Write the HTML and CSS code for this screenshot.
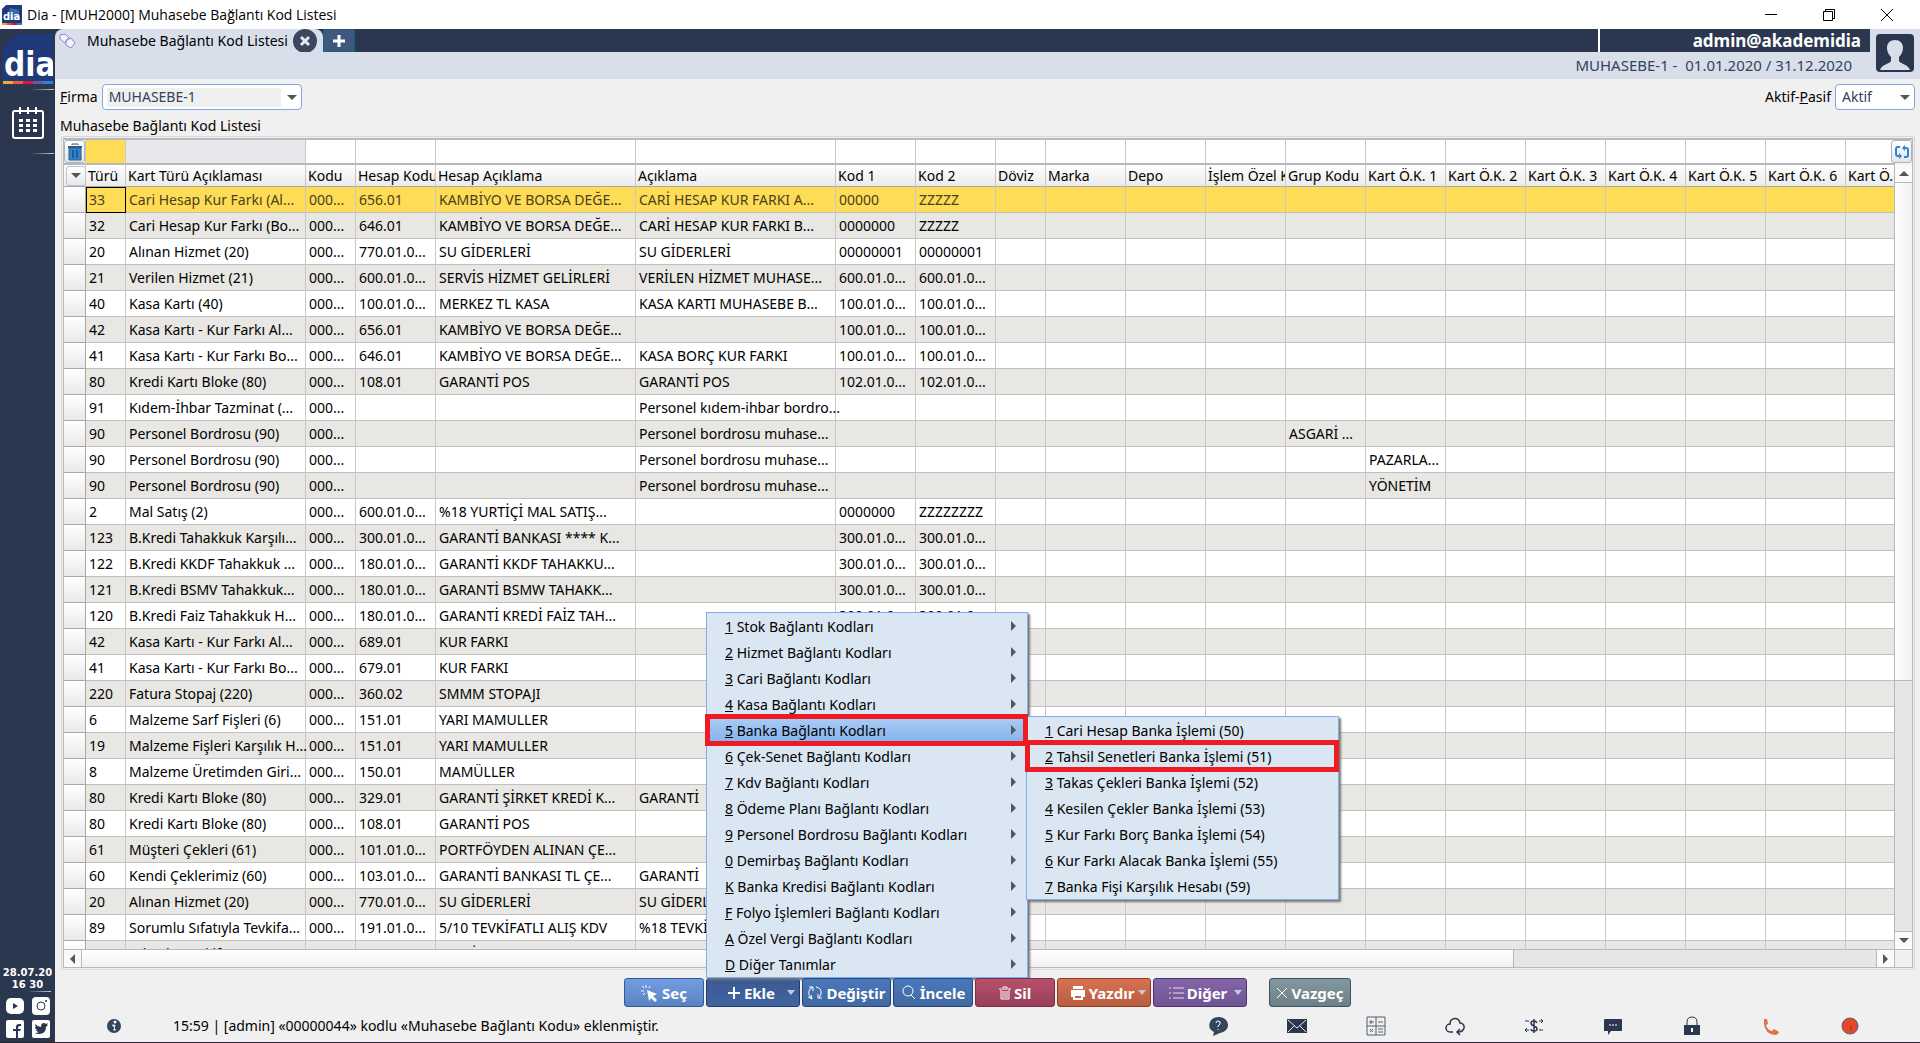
FILE: index.html
```html
<!DOCTYPE html>
<html lang="tr">
<head>
    <meta charset="UTF-8">
    <meta name="viewport" content="width=device-width, initial-scale=1.0">
    <title>Dia - [MUH2000] Muhasebe Bağlantı Kod Listesi</title>
    <link rel="stylesheet" href="styles.css">
</head>
<body>
    <header class="titlebar">
        <svg class="title-icon" viewBox="0 0 20 20"><path d="M4 0h16v18H0V4z" fill="#1f3a78"/><path d="M8 3l9 2v10H5z" fill="#4a8fd0" opacity=".6"/><text x="1" y="15" class="logo-text" font-size="11">dia</text><path d="M0 18h5v2H0z" fill="#f0a020"/><path d="M5 18h5v2H5z" fill="#e0502a"/><path d="M10 18h5v2h-5z" fill="#c8143c"/><path d="M15 18h5v2h-5z" fill="#2a7ad0"/></svg>
        <span class="title-text">Dia - [MUH2000] Muhasebe Bağlantı Kod Listesi</span>
        <div class="window-buttons">
            <button aria-label="Simge durumuna küçült"><svg width="14" height="14" viewBox="0 0 14 14"><path d="M1 6.500h12"/></svg></button>
            <button aria-label="Önceki boyut"><svg width="14" height="14" viewBox="0 0 14 14"><path d="M1.500 3.500h9v9h-9zM3.500 3V1.500h9v9H11"/></svg></button>
            <button aria-label="Kapat"><svg width="14" height="14" viewBox="0 0 14 14"><path d="M1 1l12 12M13 1L1 13"/></svg></button>
        </div>
    </header>

    <div class="app">
        <nav class="sidebar">
            <svg class="logo" width="50" height="50" viewBox="0 0 50 50"><path d="M14 0h36v47H0V14z" fill="#1f3a78"/><text x="1" y="42" class="logo-text" font-size="33">dia</text><path d="M0 47h10v3H0z" fill="#f0a83a"/><path d="M10 47h10v3H10z" fill="#e8603a"/><path d="M20 47h10v3H20z" fill="#d01840"/><path d="M30 47h10v3H30z" fill="#6a5a98"/><path d="M40 47h10v3H40z" fill="#2f80d8"/></svg>
            <hr class="side-line">
            <button class="calendar" aria-label="Takvim"><svg width="34" height="34" viewBox="0 0 34 34"><rect x="2" y="5" width="30" height="27" rx="2" fill="none" stroke="#fff" stroke-width="2"/><path d="M9 1v7M17 1v7M25 1v7" stroke="#fff" stroke-width="2"/><path d="M8 13h4v3H8zM15 13h4v3h-4zM22 13h4v3h-4zM8 18h4v3H8zM15 18h4v3h-4zM22 18h4v3h-4zM8 23h4v3H8zM15 23h4v3h-4zM22 23h4v3h-4z" fill="#fff"/></svg></button>
            <hr class="side-line">
            <div class="clock">28.07.20<br>16 30</div>
            <hr class="side-line short">
            <div class="social">
                <a href="#" aria-label="YouTube"><svg viewBox="0 0 18 18"><rect y="1" width="18" height="16" rx="5" fill="#fff"/><path d="M7 6l5 3-5 3z" fill="#2a374f"/></svg></a>
                <a href="#" aria-label="Instagram"><svg viewBox="0 0 18 18"><rect width="18" height="18" rx="4" fill="#fff"/><circle cx="9" cy="9" r="4" fill="none" stroke="#2a374f"/><circle cx="14" cy="4" r="1" fill="#2a374f"/></svg></a>
                <a href="#" aria-label="Facebook"><svg viewBox="0 0 18 18"><rect width="18" height="18" rx="2" fill="#fff"/><path d="M10 18v-7H7V9h3V7q0-3 3-3h2v2h-1q-2 0-2 2v1h3l-1 2h-2v7z" fill="#2a374f"/></svg></a>
                <a href="#" aria-label="Twitter"><svg viewBox="0 0 18 18"><rect width="18" height="18" rx="2" fill="#fff"/><path d="M3 4q3 3 6 3 0-4 3-4 1 0 2 1l2-1-1 2 1 0-2 2q0 7-7 7-3 0-4-1 2 0 4-1-2 0-3-2h1Q3 9 3 7l1 0Q3 6 3 4z" fill="#2a374f"/></svg></a>
            </div>
        </nav>

        <main class="main">
            <div class="tabs">
                <div class="tab">
                    <svg class="tab-icon" width="18" height="18" viewBox="0 0 18 18"><path d="M2 3l5-1 4 4-4 5-5-4zM8 8l5-2 4 5-4 5-5-3z" fill="#f4f2ff" stroke="#8a86c8"/></svg>
                    <span>Muhasebe Bağlantı Kod Listesi</span>
                    <button class="tab-close" aria-label="Sekmeyi kapat"><svg width="24" height="24" viewBox="0 0 24 24"><circle cx="12" cy="12" r="12" fill="#3a475c"/><path d="M8 8l8 8M16 8l-8 8" stroke="#e4e8ee" stroke-width="3"/></svg></button>
                </div>
                <button class="tab-add" aria-label="Yeni sekme"><svg width="14" height="14" viewBox="0 0 14 14"><path d="M7 1v12M1 7h12" stroke="#fff" stroke-width="3"/></svg></button>
                <div class="user-name">admin@akademidia</div>
                <div class="avatar-slot"></div>
            </div>
            <div class="period">
                <span>MUHASEBE-1 -&nbsp; 01.01.2020 / 31.12.2020</span>
                <svg class="avatar" width="38" height="38" viewBox="0 0 38 38"><rect width="38" height="38" rx="4" fill="#2a374f"/><path d="M19 6c5 0 8 3 8 8 0 4-2 7-4 9v4c1 3 9 3 11 9H4c2-6 10-6 11-9v-4c-2-2-4-5-4-9 0-5 3-8 8-8z" fill="#d8dfea"/></svg>
            </div>

            <div class="filters">
                <label for="firma"><u>F</u>irma</label>
                <div class="combo firma"><select id="firma"><option>MUHASEBE-1</option></select></div>
                <label for="durum" class="push">Aktif-<u>P</u>asif</label>
                <div class="combo durum"><select id="durum"><option>Aktif</option><option>Pasif</option></select></div>
            </div>
            <h1 class="list-title">Muhasebe Bağlantı Kod Listesi</h1>

            <section class="frame">
                <div class="grid">
                    <div class="viewport">
                        <table class="codes">
                            <colgroup id="cols"></colgroup>
                            <thead>
                                <tr class="search" id="search"></tr>
                                <tr class="heads" id="heads"></tr>
                            </thead>
                            <tbody id="rows"></tbody>
                        </table>
                    </div>
                    <div class="vscroll">
                        <div class="arrow up"></div>
                        <div class="vthumb"></div>
                        <div class="vtrack"></div>
                        <div class="arrow down"></div>
                    </div>
                    <div class="hscroll">
                        <div class="arrow left"></div>
                        <div class="hthumb"></div>
                        <div class="htrack"></div>
                        <div class="arrow right"></div>
                    </div>
                    <div class="corner"></div>
                    <button class="refresh" aria-label="Yenile"><svg width="16" height="16" viewBox="0 0 16 16"><path d="M6 3H4Q2 3 2 5v5q0 2 2 2h1M10 13h2q2 0 2-2V6q0-2-2-2h-1" fill="none" stroke="#2f86cf" stroke-width="2"/><path d="M11 1v6L8 4zM5 9v6l3-3z" fill="#2f86cf"/></svg></button>
                </div>
            </section>

            <div class="actions">
                <button class="btn light"><svg width="18" height="18" viewBox="0 0 18 18"><path d="M6 6l10 4-4 2 4 4-2 2-4-4-2 3z" fill="#fff"/><path d="M5 1v3M1 2l2 2M0 7h3M2 11l2-2M9 2L8 4" stroke="#fff"/></svg>Seç</button>
                <div class="menu-holder">
                    <button class="btn dark has-menu" aria-expanded="true"><svg width="14" height="14" viewBox="0 0 14 14"><path d="M7 1v12M1 7h12" stroke="#fff" stroke-width="2"/></svg>Ekle</button>
                    <ul class="menu">
                        <li class="parent"><u>1</u> Stok Bağlantı Kodları</li>
                        <li class="parent"><u>2</u> Hizmet Bağlantı Kodları</li>
                        <li class="parent"><u>3</u> Cari Bağlantı Kodları</li>
                        <li class="parent"><u>4</u> Kasa Bağlantı Kodları</li>
                        <li class="parent active marked"><u>5</u> Banka Bağlantı Kodları
                            <ul class="menu submenu">
                                <li><u>1</u> Cari Hesap Banka İşlemi (50)</li>
                                <li class="marked"><u>2</u> Tahsil Senetleri Banka İşlemi (51)</li>
                                <li><u>3</u> Takas Çekleri Banka İşlemi (52)</li>
                                <li><u>4</u> Kesilen Çekler Banka İşlemi (53)</li>
                                <li><u>5</u> Kur Farkı Borç Banka İşlemi (54)</li>
                                <li><u>6</u> Kur Farkı Alacak Banka İşlemi (55)</li>
                                <li><u>7</u> Banka Fişi Karşılık Hesabı (59)</li>
                            </ul>
                        </li>
                        <li class="parent"><u>6</u> Çek-Senet Bağlantı Kodları</li>
                        <li class="parent"><u>7</u> Kdv Bağlantı Kodları</li>
                        <li class="parent"><u>8</u> Ödeme Planı Bağlantı Kodları</li>
                        <li class="parent"><u>9</u> Personel Bordrosu Bağlantı Kodları</li>
                        <li class="parent"><u>0</u> Demirbaş Bağlantı Kodları</li>
                        <li class="parent"><u>K</u> Banka Kredisi Bağlantı Kodları</li>
                        <li class="parent"><u>F</u> Folyo İşlemleri Bağlantı Kodları</li>
                        <li class="parent"><u>A</u> Özel Vergi Bağlantı Kodları</li>
                        <li class="parent"><u>D</u> Diğer Tanımlar</li>
                    </ul>
                </div>
                <button class="btn blue wide"><svg width="16" height="16" viewBox="0 0 16 16"><path d="M4 13Q0 8 3 4l3-2M9 2q6 1 5 7l-2 4" fill="none" stroke="#fff"/><path d="M2 2h4v4M15 13h-4V9M1 12l4 2-1-4" fill="none" stroke="#fff"/></svg>Değiştir</button>
                <button class="btn blue"><svg width="16" height="16" viewBox="0 0 16 16"><circle cx="7" cy="6" r="5" fill="none" stroke="#fff"/><path d="M10 10l4 4" stroke="#fff"/></svg>İncele</button>
                <button class="btn red"><svg width="12" height="14" viewBox="0 0 12 14"><path d="M0 3h12M4 2V1h4v1M2 4v9h8V4M4 5v7M6 5v7M8 5v7" fill="none" stroke="#fff"/></svg>Sil</button>
                <button class="btn orange has-menu"><svg width="16" height="14" viewBox="0 0 16 14"><path d="M3 0h10v3H3zM1 4h14v7h-2V8H3v3H1z" fill="#fff"/><path d="M4 9h8v4H4z" fill="none" stroke="#fff" stroke-width="2"/></svg>Yazdır</button>
                <button class="btn purple has-menu"><svg width="15" height="14" viewBox="0 0 15 14"><path d="M0 2h2M4 2h11M0 7h2M4 7h11M0 12h2M4 12h11" stroke="#e4dcf0"/></svg>Diğer</button>
                <button class="btn gray"><svg width="12" height="12" viewBox="0 0 12 12"><path d="M1 1l10 10M11 1L1 11" stroke="#fff"/></svg>Vazgeç</button>
            </div>

            <footer class="status">
                <svg width="16" height="16" viewBox="0 0 16 16"><circle cx="8" cy="8" r="7" fill="#34465c"/><path d="M8 3h2v2H8zM6 7h3l-1 5h2M7 12h2" fill="#fff" stroke="#fff" stroke-width=".6"/></svg>
                <span class="message">15:59 | [admin] «00000044» kodlu «Muhasebe Bağlantı Kodu» eklenmiştir.</span>
                <div class="tools">
                    <svg viewBox="0 0 20 20"><path d="M10 1a9 8 0 0 1 2 16q-2 1-7 3l1-4A9 8 0 0 1 10 1z" fill="#34465c"/><path d="M8 7q0-2 2-2 3 0 2 3l-2 2v1M10 13v1" stroke="#fff" fill="none"/></svg>
                    <svg viewBox="0 0 20 20"><path d="M0 3h20v14H0z" fill="#2a374f"/><path d="M1 4l9 8 9-8M1 16l6-6M19 16l-6-6" stroke="#e8eaee" fill="none"/></svg>
                    <svg viewBox="0 0 20 20"><path d="M1 1h18v18H1zM10 1v18M1 10h18M3 6h5M5 4v4M12 6h5M4 13l3 3M7 13l-3 3M12 13h5M12 16h5" fill="none" stroke="#506070"/></svg>
                    <svg viewBox="0 0 20 20"><path d="M8 16H5a4 4 0 0 1 0-8 5 5 0 0 1 10-1 4 4 0 0 1 4 5q-1 4-6 4M15 13l-3 3 3 3" fill="none" stroke="#2a374f" stroke-width="1.500"/></svg>
                    <svg viewBox="0 0 20 20"><path d="M13 7q-1-2-3-2-3 0-3 2 0 2 3 3 3 1 3 3t-3 2-3-2M10 3v14" fill="none" stroke="#2a374f" stroke-width="1.500"/><path d="M1 5h4M15 5h4M17 3l2 2-2 2M1 14h4M15 14h4M3 12l-2 2 2 2" fill="none" stroke="#2a374f"/></svg>
                    <svg viewBox="0 0 20 20"><path d="M2 3h16q1 0 1 1v11H8l-3 4v-4H1V4q0-1 1-1z" fill="#2a374f"/><path d="M6 9h2M9 9h2M12 9h2" stroke="#fff"/></svg>
                    <svg viewBox="0 0 20 20"><path d="M5 9V6q0-5 5-5t5 5v3" fill="none" stroke="#2a374f"/><path d="M2 9h16v10H2z" fill="#2a374f"/><path d="M10 12v4" stroke="#fff" stroke-width="2"/></svg>
                    <svg viewBox="0 0 20 20"><path d="M3 3l3 0 1 5-2 1q1 5 6 6l2-2 5 3q-1 3-4 3Q4 18 3 8z" fill="#e0704a"/></svg>
                    <svg viewBox="0 0 20 20"><circle cx="10" cy="10" r="8" fill="#e8472e" stroke="#506070"/><path d="M11 10v4" stroke="#8a2a20"/></svg>
                </div>
            </footer>
        </main>
    </div>
    <script src="script.js"></script>
</body>
</html>
```
FILE: styles.css
```css
* {
    box-sizing: border-box;
}
body {
    margin: 0;
    height: 100vh;
    display: flex;
    flex-direction: column;
    overflow: hidden;
    background: #f0f0f0;
    border-bottom: 1px solid #2a2430;
    color: #000;
    font-family: "Noto Sans", Tahoma, sans-serif;
    font-size: 14px;
    line-height: 20px;
}
button, select, input {
    font: inherit;
    margin: 0;
    padding: 0;
    border: 0;
    background: none;
}
svg {
    display: block;
    flex: none;
}

/* window title */
.titlebar {
    height: 29px;
    flex: none;
    display: flex;
    align-items: center;
    background: #fff;
    padding-left: 2px;
}
.title-icon {
    width: 20px;
    height: 20px;
}
.logo-text {
    font-family: "DejaVu Sans Condensed", "Open Sans", sans-serif;
    font-weight: bold;
    fill: #fff;
}
.title-text {
    font-family: "Open Sans", sans-serif;
    margin-left: 5px;
}
.window-buttons {
    margin-left: auto;
    margin-right: 4px;
    display: flex;
}
.window-buttons button {
    width: 58px;
    height: 28px;
    display: flex;
    align-items: center;
    justify-content: center;
}
.window-buttons path {
    stroke: #000;
    fill: none;
}

.app {
    flex: 1;
    min-height: 0;
    display: flex;
}

/* left bar */
.sidebar {
    width: 55px;
    flex: none;
    display: flex;
    flex-direction: column;
    align-items: center;
    padding: 5px 0 4px;
    background: #2a374f;
    color: #fff;
}
.side-line {
    width: 24px;
    height: 1px;
    margin: 5px 1px 0 0;
    border: 0;
    align-self: flex-end;
    background: linear-gradient(to right, #2a374f, #c8ccd4);
}
.side-line.short {
    margin: 0 4px 5px 0;
}
.calendar {
    margin: 16px 0 8px;
}
.clock {
    margin-top: auto;
    text-align: center;
    font-family: "DejaVu Sans", sans-serif;
    font-size: 10px;
    font-weight: bold;
    line-height: 12px;
}
.social {
    display: grid;
    grid-template-columns: 18px 18px;
    gap: 5px 8px;
}
.social svg {
    width: 18px;
    height: 18px;
}

/* tabs and user */
.main {
    flex: 1;
    min-width: 0;
    display: flex;
    flex-direction: column;
}
.tabs {
    height: 23px;
    flex: none;
    display: flex;
    background: #2a374f;
}
.tab {
    display: flex;
    align-items: center;
    width: 268px;
    padding-left: 3px;
    background: #d8dfea;
    border-radius: 8px 8px 0 0;
    white-space: nowrap;
}
.tab span {
    margin-left: 11px;
}
.tab-close {
    margin-left: auto;
    margin-right: 6px;
}
.tab-add {
    width: 32px;
    display: flex;
    align-items: center;
    justify-content: center;
    background: #40587e;
    border: 1px solid #14607e;
}
.user-name {
    margin-left: auto;
    width: 272px;
    padding-right: 9px;
    border-left: 2px solid #fff;
    text-align: right;
    font-size: 17px;
    font-weight: bold;
    line-height: 23px;
    color: #fff;
}
.avatar-slot {
    width: 50px;
    background: #d8dfea;
}
.period {
    height: 27px;
    flex: none;
    position: relative;
    padding-right: 68px;
    text-align: right;
    font-size: 15px;
    line-height: 26px;
    background: #d8dfea;
    color: #33435c;
}
.avatar {
    position: absolute;
    right: 6px;
    bottom: 7px;
}

/* filter line */
.filters {
    display: flex;
    align-items: center;
    padding: 5px 5px 0;
}
.combo {
    position: relative;
    height: 26px;
    margin-left: 4px;
    border: 1px solid #7fa6e0;
    border-radius: 4px;
    background: #fff;
}
.combo select {
    appearance: none;
    width: 100%;
    height: 24px;
    padding: 0 20px 0 6px;
    color: #33435c;
    line-height: 24px;
}
.combo::after {
    content: "";
    position: absolute;
    right: 4px;
    top: 10px;
    border: 5px solid transparent;
    border-top-color: #555;
    border-bottom: 0;
    pointer-events: none;
}
.firma {
    width: 200px;
}
.firma select {
    background: linear-gradient(#f0f0f0, #f0f0f0) 4px 3px / 174px 19px no-repeat;
}
.durum {
    width: 80px;
}
.push {
    margin-left: auto;
}
.list-title {
    margin: 0;
    padding: 6px 0 0 5px;
    font-size: 14px;
    font-weight: normal;
}

/* grid */
.frame {
    flex: 1;
    min-height: 0;
    margin: 0 5px 0 6px;
    padding: 1px;
    border: 1px solid #d8d8d8;
    border-radius: 2px;
}
.grid {
    position: relative;
    height: 100%;
    display: grid;
    grid-template-columns: minmax(0, 1fr) 18px;
    grid-template-rows: minmax(0, 1fr) 18px;
    border: 1px solid #b8b8b8;
    border-top-width: 2px;
}
.viewport {
    overflow: hidden;
    background: #fff;
}
.codes {
    table-layout: fixed;
    width: 1860px;
    border-collapse: separate;
    border-spacing: 0;
}
.codes th, .codes td {
    padding: 0 0 0 3px;
    border-right: 1px solid #c8c8c8;
    border-bottom: 1px solid #c0c0c0;
    text-align: left;
    font-weight: normal;
    white-space: nowrap;
}
.codes .search th {
    height: 25px;
    padding: 0;
    border-bottom: 2px solid #b8b8b8;
}
.search input {
    display: block;
    width: 100%;
    height: 23px;
    outline: 0;
}
.codes .heads th {
    height: 22px;
    padding-left: 2px;
    overflow: hidden;
    line-height: 21px;
    border-bottom-color: #a8a8a8;
    background: linear-gradient(#fff, #ebebeb);
}
.codes td {
    height: 26px;
    line-height: 25px;
}
.codes tbody tr:nth-child(even) td {
    background: #e8e7e3;
}
.codes tbody tr.selected td {
    background: #ffdc55;
    color: #4a4020;
}
.codes tbody tr.selected td:first-of-type {
    outline: 1px solid #000;
    outline-offset: -1px;
}
.codes tbody th {
    background: linear-gradient(#fff, #e9e9e9);
    border-color: #a8a8a8;
}
.search .typed {
    background: #ffdc55;
}
.search .locked {
    background: #e7e7ee;
}
.trash, .refresh {
    display: flex;
    align-items: center;
    justify-content: center;
    height: 23px;
    width: 21px;
    border: 1px solid #b0b4b8;
    border-radius: 3px;
    background: linear-gradient(#fff, #dfe6ec);
}
.refresh {
    position: absolute;
    right: 0;
    top: 0;
}
.picker {
    display: block;
    width: 20px;
    height: 20px;
    border: 1px solid #c0c4c8;
    border-radius: 3px;
    background: linear-gradient(#fff, #e4e8ec);
}
.picker::after {
    content: "";
    display: block;
    margin: 0 auto;
    width: 0;
    border: 5px solid transparent;
    border-top-color: #555;
    border-bottom: 0;
}

/* scroll bars */
.vscroll {
    display: flex;
    flex-direction: column;
    padding-top: 25px;
    border-left: 1px solid #b8b8b8;
    background: #f4f4f4;
}
.arrow {
    flex: none;
    display: flex;
    align-items: center;
    justify-content: center;
    background: #fafafa;
}
.up, .down {
    height: 17px;
}
.left, .right {
    width: 17px;
}
.arrow::after {
    content: "";
    border: 5px solid transparent;
}
.up::after {
    border-bottom-color: #555;
    border-top: 0;
}
.down::after {
    border-top-color: #555;
    border-bottom: 0;
}
.left::after {
    border-right-color: #555;
    border-left: 0;
}
.right::after {
    border-left-color: #555;
    border-right: 0;
}
.vthumb {
    flex: 498;
    border: solid #b8b8b8;
    border-width: 1px 0;
    background: linear-gradient(to right, #fff, #f0f0f0);
}
.vtrack {
    flex: 250;
    border-bottom: 1px solid #b8b8b8;
    background: #e6e6e6;
}
.hscroll {
    display: flex;
    border-top: 1px solid #b8b8b8;
}
.hthumb {
    flex: 1434;
    border: solid #b8b8b8;
    border-width: 0 1px;
    background: linear-gradient(#fff, #f0f0f0);
}
.htrack {
    flex: 363;
    border-right: 1px solid #b8b8b8;
    background: #e6e6e6;
}
.corner {
    border: solid #b8b8b8;
    border-width: 1px 0 0 1px;
}

/* action buttons */
.actions {
    display: flex;
    justify-content: center;
    gap: 2px;
    padding: 8px 0 2px;
}
.btn {
    position: relative;
    display: flex;
    align-items: center;
    justify-content: center;
    gap: 3px;
    width: 80px;
    height: 29px;
    overflow: hidden;
    border: 1px solid #24467e;
    border-radius: 3px;
    color: #fff;
    font-size: 15px;
    font-weight: bold;
    white-space: nowrap;
}
.light {
    background: linear-gradient(#749ee2, #5a82c2);
    border-color: #35589a;
}
.dark {
    background: linear-gradient(#3a5a94, #41659f);
    border-color: #1f3a6c;
}
.blue {
    background: linear-gradient(#4a78bc, #41689f);
}
.red {
    background: linear-gradient(#b8506a, #98405a);
    border-color: #7c2c44;
}
.orange {
    background: linear-gradient(#d87254, #b85c40);
    border-color: #8c3c24;
}
.purple {
    background: linear-gradient(#8466a8, #705494);
    border-color: #4c3470;
}
.gray {
    width: 82px;
    margin-left: 20px;
    background: linear-gradient(#8298a0, #6c7f88);
    border-color: #3c5260;
}
.wide {
    width: 89px;
}
.has-menu {
    width: 94px;
    padding-right: 4px;
}
.has-menu::after {
    content: "";
    position: absolute;
    right: 4px;
    top: 11px;
    border: 4px solid transparent;
    border-top: 5px solid #c8c8dc;
    border-bottom: 0;
}

/* menus */
.menu-holder {
    position: relative;
}
.menu {
    position: absolute;
    left: 0;
    bottom: 100%;
    width: 322px;
    margin: 0;
    padding: 0;
    list-style: none;
    border: 1px solid #7fb0ea;
    background: #dae6f2;
    box-shadow: 2px 2px 2px #777;
}
.menu li {
    position: relative;
    height: 26px;
    padding-left: 18px;
    line-height: 27px;
    white-space: nowrap;
}
.parent::after {
    content: "";
    position: absolute;
    right: 11px;
    top: 8px;
    border: 5px solid transparent;
    border-left-color: #505860;
    border-right: 0;
}
.menu .active {
    background: linear-gradient(#acccf4, #84b2ec);
}
.marked::before {
    content: "";
    position: absolute;
    z-index: 2;
    inset: -3px -1px -3px -2px;
    border: 5px solid #ed1c24;
}
.submenu {
    left: 319px;
    top: -1px;
    bottom: auto;
    width: 313px;
}

/* status line */
.status {
    display: flex;
    align-items: center;
    height: 33px;
    flex: none;
    padding-left: 51px;
}
.message {
    margin-left: 51px;
}
.tools {
    margin-left: auto;
    margin-right: 60px;
    display: flex;
    gap: 59px;
}
.tools svg {
    width: 20px;
    height: 20px;
}
```
FILE: script.js
```js
var columns = [
    ["Türü", 40], ["Kart Türü Açıklaması", 180], ["Kodu", 50], ["Hesap Kodu", 80],
    ["Hesap Açıklama", 200], ["Açıklama", 200], ["Kod 1", 80], ["Kod 2", 80], ["Döviz", 50],
    ["Marka", 80], ["Depo", 80], ["İşlem Özel Kodu", 80], ["Grup Kodu", 80],
    ["Kart Ö.K. 1", 80], ["Kart Ö.K. 2", 80], ["Kart Ö.K. 3", 80], ["Kart Ö.K. 4", 80],
    ["Kart Ö.K. 5", 80], ["Kart Ö.K. 6", 80], ["Kart Ö.K. 7", 80]
];

// türü, kart türü, hesap kodu, hesap açıklama, açıklama, kod 1, kod 2, grup, kart ö.k. 1
var data = [
    ["33", "Cari Hesap Kur Farkı (Al...", "656.01", "KAMBİYO VE BORSA DEĞE...", "CARİ HESAP KUR FARKI A...", "00000", "ZZZZZ"],
    ["32", "Cari Hesap Kur Farkı (Bo...", "646.01", "KAMBİYO VE BORSA DEĞE...", "CARİ HESAP KUR FARKI B...", "0000000", "ZZZZZ"],
    ["20", "Alınan Hizmet (20)", "770.01.0...", "SU GİDERLERİ", "SU GİDERLERİ", "00000001", "00000001"],
    ["21", "Verilen Hizmet (21)", "600.01.0...", "SERVİS HİZMET GELİRLERİ", "VERİLEN HİZMET MUHASE...", "600.01.0...", "600.01.0..."],
    ["40", "Kasa Kartı (40)", "100.01.0...", "MERKEZ TL KASA", "KASA KARTI MUHASEBE B...", "100.01.0...", "100.01.0..."],
    ["42", "Kasa Kartı - Kur Farkı Al...", "656.01", "KAMBİYO VE BORSA DEĞE...", "", "100.01.0...", "100.01.0..."],
    ["41", "Kasa Kartı - Kur Farkı Bo...", "646.01", "KAMBİYO VE BORSA DEĞE...", "KASA BORÇ KUR FARKI", "100.01.0...", "100.01.0..."],
    ["80", "Kredi Kartı Bloke (80)", "108.01", "GARANTİ POS", "GARANTİ POS", "102.01.0...", "102.01.0..."],
    ["91", "Kıdem-İhbar Tazminat (...", "", "", "Personel kıdem-ihbar bordro..."],
    ["90", "Personel Bordrosu (90)", "", "", "Personel bordrosu muhase...", "", "", "ASGARİ ..."],
    ["90", "Personel Bordrosu (90)", "", "", "Personel bordrosu muhase...", "", "", "", "PAZARLA..."],
    ["90", "Personel Bordrosu (90)", "", "", "Personel bordrosu muhase...", "", "", "", "YÖNETİM"],
    ["2", "Mal Satış (2)", "600.01.0...", "%18 YURTİÇİ MAL SATIŞ...", "", "0000000", "ZZZZZZZZ"],
    ["123", "B.Kredi Tahakkuk Karşılı...", "300.01.0...", "GARANTİ BANKASI **** K...", "", "300.01.0...", "300.01.0..."],
    ["122", "B.Kredi KKDF Tahakkuk ...", "180.01.0...", "GARANTİ KKDF TAHAKKU...", "", "300.01.0...", "300.01.0..."],
    ["121", "B.Kredi BSMV Tahakkuk...", "180.01.0...", "GARANTİ BSMW TAHAKK...", "", "300.01.0...", "300.01.0..."],
    ["120", "B.Kredi Faiz Tahakkuk H...", "180.01.0...", "GARANTİ KREDİ FAİZ TAH...", "", "300.01.0...", "300.01.0..."],
    ["42", "Kasa Kartı - Kur Farkı Al...", "689.01", "KUR FARKI"],
    ["41", "Kasa Kartı - Kur Farkı Bo...", "679.01", "KUR FARKI"],
    ["220", "Fatura Stopaj (220)", "360.02", "SMMM STOPAJI"],
    ["6", "Malzeme Sarf Fişleri (6)", "151.01", "YARI MAMULLER"],
    ["19", "Malzeme Fişleri Karşılık H...", "151.01", "YARI MAMULLER"],
    ["8", "Malzeme Üretimden Giri...", "150.01", "MAMÜLLER"],
    ["80", "Kredi Kartı Bloke (80)", "329.01", "GARANTİ ŞİRKET KREDİ K...", "GARANTİ"],
    ["80", "Kredi Kartı Bloke (80)", "108.01", "GARANTİ POS"],
    ["61", "Müşteri Çekleri (61)", "101.01.0...", "PORTFÖYDEN ALINAN ÇE..."],
    ["60", "Kendi Çeklerimiz (60)", "103.01.0...", "GARANTİ BANKASI TL ÇE...", "GARANTİ"],
    ["20", "Alınan Hizmet (20)", "770.01.0...", "SU GİDERLERİ", "SU GİDERLERİ"],
    ["89", "Sorumlu Sıfatıyla Tevkifa...", "191.01.0...", "5/10 TEVKİFATLI ALIŞ KDV", "%18 TEVKİFATLI"],
    ["74", "Kdv Alış Tevkifat (74)", "360.01...", "TEVKİFATLI KDV", "%18 ALIŞ"]
];

var cols = '<col style="width:22px">';
var heads = '<th><button class="picker" aria-label="Kolonlar"></button></th>';
var search = '<th><button class="trash" aria-label="Temizle"><svg width="16" height="18" viewBox="0 0 16 18"><path d="M5 2V1h6v1" fill="none" stroke="#3a5a7a"/><path d="M1 3h14v2H1z" fill="#3a5a7a"/><path d="M2 5h12v12H2z" fill="#2f86cf" stroke="#2a5a8a"/><path d="M6 7v8M10 7v8" stroke="#1c5c9c" stroke-width="2"/></svg></button></th>';
columns.forEach(function (c, i) {
    var cls = i == 0 ? "typed" : i == 1 ? "locked" : "";
    cols += '<col style="width:' + c[1] + 'px">';
    heads += "<th>" + c[0] + "</th>";
    search += '<th class="' + cls + '"><input type="text" aria-label="' + c[0] + '"></th>';
});
document.querySelector("#cols").innerHTML = cols;
document.querySelector("#heads").innerHTML = heads;
document.querySelector("#search").innerHTML = search;

var rows = "";
data.forEach(function (d, i) {
    var cells = [d[0], d[1], "000...", d[2], d[3], d[4], d[5], d[6], "", "", "", "", d[7], d[8]];
    rows += i == 0 ? '<tr class="selected"><th></th>' : "<tr><th></th>";
    for (var k = 0; k < columns.length; k++) {
        rows += "<td>" + (cells[k] || "") + "</td>";
    }
    rows += "</tr>";
});
document.querySelector("#rows").innerHTML = rows;
```
